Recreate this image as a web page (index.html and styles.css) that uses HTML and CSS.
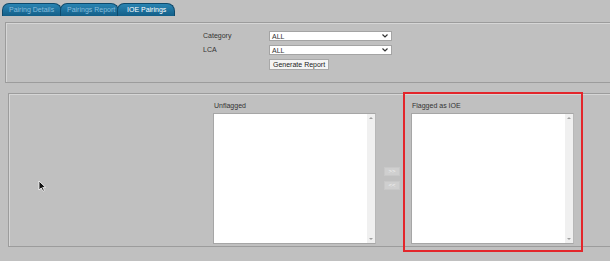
FILE: index.html
```html
<!DOCTYPE html>
<html lang="en">
<head>
    <meta charset="UTF-8">
    <title>IOE Pairings</title>
    <link rel="stylesheet" href="styles.css">
</head>
<body>
    <div class="tabs">
        <div class="tab">Pairing Details</div>
        <div class="tab">Pairings Report</div>
        <div class="tab active">IOE Pairings</div>
    </div>

    <div class="panel filters">
        <div class="filter-grid">
            <span class="label">Category</span>
            <div class="select">
                <span>ALL</span>
                <svg width="6" height="4" viewBox="0 0 6 4"><path d="M0.5 0.5 L3 3 L5.5 0.5" fill="none" stroke="#333" stroke-width="1.2"/></svg>
            </div>
            <span class="label">LCA</span>
            <div class="select">
                <span>ALL</span>
                <svg width="6" height="4" viewBox="0 0 6 4"><path d="M0.5 0.5 L3 3 L5.5 0.5" fill="none" stroke="#333" stroke-width="1.2"/></svg>
            </div>
            <span></span>
            <div><button class="report-btn">Generate Report</button></div>
        </div>
    </div>

    <div class="panel lists">
        <div class="list-col">
            <div class="list-title">Unflagged</div>
            <div class="listbox">
                <div class="list-body"></div>
                <div class="scroll"><span class="arrow up"></span><span class="arrow down"></span></div>
            </div>
        </div>

        <div class="move-btns">
            <button class="move-btn">&gt;&gt;</button>
            <button class="move-btn">&lt;&lt;</button>
        </div>

        <div class="list-col flagged">
            <div class="list-title">Flagged as IOE</div>
            <div class="listbox">
                <div class="list-body"></div>
                <div class="scroll"><span class="arrow up"></span><span class="arrow down"></span></div>
            </div>
            <div class="highlight"></div>
        </div>

        <!-- mouse pointer caught in the capture -->
        <svg class="cursor" width="9" height="12" viewBox="0 0 9 12">
            <path d="M1 1 L1 10 L3.2 8 L5 11.2 L6.4 10.5 L4.7 7.4 L7.6 7.4 Z" fill="#111" stroke="#fff" stroke-width="0.8"/>
        </svg>
    </div>
</body>
</html>
```

FILE: styles.css
```css
html {
    overflow: hidden;
}
body {
    margin: 0;
    min-height: 261px;
    background-color: #c0c0c0;
    font-family: "Liberation Sans", Arial, sans-serif;
    font-size: 7px;
    color: #333;
}

/* tab strip */
.tabs {
    display: flex;
    padding: 3px 0 0 2px;
}
.tab {
    height: 13px;
    box-sizing: border-box;
    padding: 0 4px 0 6px;
    margin-right: -2px;
    line-height: 12px;
    color: #86bddc;
    background: linear-gradient(#2a84b2, #135f88);
    border: 1px solid #0e4a6c;
    border-bottom: none;
    border-radius: 7px 8px 0 0;
    white-space: nowrap;
    overflow: hidden;
}
.tab:first-child {
    width: 60px;
}
.tab:nth-child(2) {
    width: 59px;
}
.tab.active {
    width: 58px;
    color: #fff;
    padding-left: 9px;
}

/* bordered sections */
.panel {
    box-sizing: border-box;
    border: 1px solid #9c9c9c;
    box-shadow: inset 1px 1px 0 #d6d6d6;
}
.filters {
    height: 61px;
    margin: 6px -6px 0 5px;
    padding: 8px 0 0 197px;
}
.filter-grid {
    display: grid;
    grid-template-columns: 66px 123px;
    row-gap: 4px;
}
.label {
    line-height: 9px;
}
.select {
    display: flex;
    align-items: center;
    justify-content: space-between;
    height: 10px;
    box-sizing: border-box;
    padding: 0 3px 0 2px;
    background-color: #fff;
    border: 1px solid #a4a4a4;
}
.report-btn {
    height: 11px;
    padding: 0 3px;
    font-family: inherit;
    font-size: 7px;
    line-height: 9px;
    color: #222;
    background-color: #f4f4f4;
    border: 1px solid #a8a8a8;
    border-radius: 0;
}

.lists {
    position: relative;
    display: flex;
    height: 154px;
    margin: 10px -6px 0 8px;
    padding: 7px 0 0 204px;
}
.list-col {
    width: 163px;
}
.list-title {
    line-height: 9px;
    margin-bottom: 3px;
    padding-left: 1px;
}
.listbox {
    display: flex;
    height: 131px;
    box-sizing: border-box;
    background-color: #fff;
    border: 1px solid #a6a6a6;
    border-right-color: #b8b8b8;
}
.list-body {
    flex: 1;
}
.scroll {
    display: flex;
    flex-direction: column;
    justify-content: space-between;
    align-items: center;
    width: 8px;
    padding: 3px 0;
    background-color: #f0f0f0;
}
.arrow {
    width: 0;
    height: 0;
    border-left: 2px solid transparent;
    border-right: 2px solid transparent;
}
.arrow.up {
    border-bottom: 2px solid #a0a0a0;
}
.arrow.down {
    border-top: 2px solid #a0a0a0;
}

.move-btns {
    display: flex;
    flex-direction: column;
    justify-content: center;
    gap: 5px;
    width: 16px;
    height: 143px;
    padding-top: 12px;
    box-sizing: border-box;
    margin: 0 11px 0 8px;
}
.move-btn {
    height: 9px;
    padding: 0;
    font-family: inherit;
    font-size: 6px;
    line-height: 7px;
    color: #f2f2f2;
    background-color: #cfcfcf;
    border: 1px solid #c8c8c8;
    border-radius: 0;
}

/* red highlight round the flagged list */
.flagged {
    position: relative;
}
.highlight {
    position: absolute;
    top: -9px;
    left: -8px;
    width: 180px;
    height: 160px;
    box-sizing: border-box;
    border: 2px solid #e3262b;
    pointer-events: none;
}

.cursor {
    position: absolute;
    left: 29px;
    top: 86px;
}
```
